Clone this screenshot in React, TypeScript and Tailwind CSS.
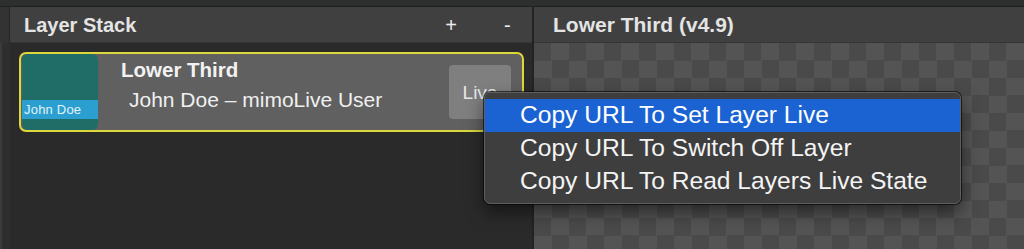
import React from "react";

export default function App() {
  return (
    <div className="relative w-[1024px] h-[249px] overflow-hidden bg-[#2a2a2a] font-['Liberation_Sans',Arial,sans-serif]">
      {/* top strip */}
      <div className="h-[7px] bg-[#2d2f2e] border-b border-[#1e2120]" />
      <div className="flex h-[242px]">
        {/* left gutter */}
        <div className="w-[10px] flex flex-col">
          <div className="h-[36px] bg-[#333333] border-r border-[#262626]" />
          <div className="flex-1 bg-[#2e2e2e] border-l-2 border-[#3b3b3b]" />
        </div>
        {/* Layer stack panel */}
        <div className="w-[522px] flex flex-col">
          <div className="h-[36px] bg-[#404040] flex items-center pl-[14px] border-b border-[#353535]">
            <span className="text-[20px] font-bold text-[#e4e4e4] leading-none">Layer Stack</span>
            <span className="ml-[309px] text-[20px] text-[#ececec] leading-none">+</span>
            <span className="ml-[47px] text-[20px] text-[#ececec] leading-none">-</span>
          </div>
          <div className="flex-1 bg-[#2a2a2a] pl-[9px] pt-[9px]">
            <div className="w-[505px] h-[80px] border-2 border-[#dcd83c] rounded-[7px] bg-[#606060] flex items-center pl-px pr-[11px]">
              <div className="w-[76px] h-[76px] rounded-[6px] bg-[#1f6d66] flex flex-col overflow-hidden">
                <div className="h-[46px]" />
                <div className="h-[19px] bg-[#2b9fcf] flex items-center pl-[2px]">
                  <span className="text-[13px] text-[#e3f2f8] leading-none tracking-[0.2px]">John Doe</span>
                </div>
              </div>
              <div className="flex flex-col self-start pt-[4px] ml-[23px]">
                <span className="text-[20.5px] font-bold text-[#f2f2f2] leading-[24px]">Lower Third</span>
                <span className="mt-[6px] ml-[8px] text-[21px] text-[#f0f0f0] leading-[24px]">John Doe – mimoLive User</span>
              </div>
              <div className="ml-auto w-[62px] h-[54px] rounded-[4px] bg-[#7f7f7f] flex items-center justify-center">
                <span className="text-[19px] text-[#e6e6e6] leading-none">Live</span>
              </div>
            </div>
          </div>
        </div>
        {/* divider */}
        <div className="w-[2px] bg-[#232323]" />
        {/* preview panel */}
        <div className="flex-1 flex flex-col">
          <div className="h-[36px] bg-[#404040] flex items-center pl-[19px] border-b border-[#353535]">
            <span className="text-[21px] font-bold text-[#e4e4e4] leading-none">Lower Third (v4.9)</span>
          </div>
          <div className="flex-1 bg-[conic-gradient(#545454_25%,#4a4a4a_0_50%,#545454_0_75%,#4a4a4a_0)] bg-[length:35px_35px]" />
        </div>
      </div>

      {/* context menu */}
      <div className="absolute left-[484px] top-[92px] w-[477px] h-[112px] rounded-[6px] bg-[#3e3e3e] border border-[#5e5e5e] shadow-[0_0_0_1px_rgba(0,0,0,0.6),0_8px_18px_rgba(0,0,0,0.5)] pt-[6px] overflow-hidden">
        <div className="h-[33px] bg-[#1b63d2] flex items-center pl-[35px]">
          <span className="text-[24.6px] text-white leading-none">Copy URL To Set Layer Live</span>
        </div>
        <div className="h-[33px] flex items-center pl-[35px]">
          <span className="text-[24.6px] text-[#f4f4f4] leading-none">Copy URL To Switch Off Layer</span>
        </div>
        <div className="h-[33px] flex items-center pl-[35px]">
          <span className="text-[24.6px] text-[#f4f4f4] leading-none">Copy URL To Read Layers Live State</span>
        </div>
      </div>
    </div>
  );
}
